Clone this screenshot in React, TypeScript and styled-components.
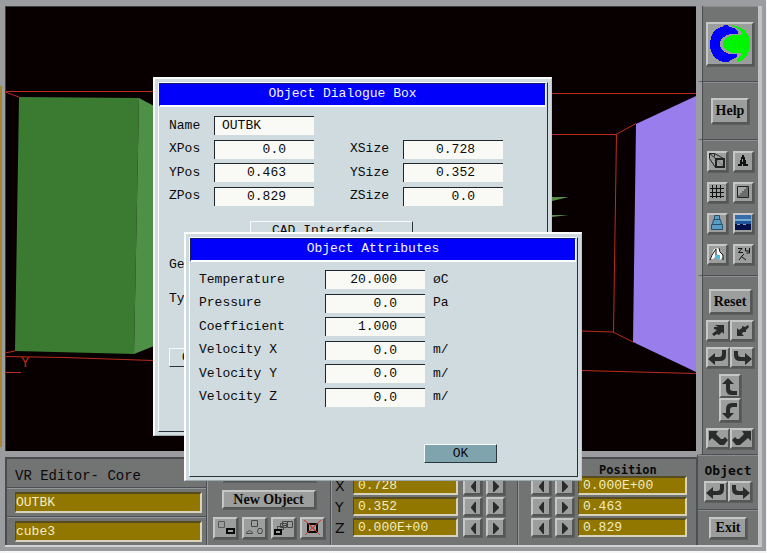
import React from "react";
import styled, { createGlobalStyle, css } from "styled-components";

const mono = '"Liberation Mono", "Courier New", monospace';
const serif = '"Liberation Serif", "Times New Roman", serif';

const GlobalStyle = createGlobalStyle`
  *, *::before, *::after { box-sizing: border-box; }
  body { margin: 0; padding: 0 1px 2px 0; background: #f6f6f6; }
  button, input { margin: 0; border-radius: 0; color: inherit; }
  svg { display: block; flex: none; }
`;

const Frame = styled.main`
  position: relative;
  display: flex;
  min-height: calc(100vh - 2px);
  padding: 6px 4px 4px 5px;
  background: linear-gradient(#a8852c, #a8852c) 0 86px / 2px 361px no-repeat, #9b9c9f;
  font: 13px/16px ${mono};
  color: #0a0a0a;
`;

const Shell = styled.div`
  flex: 1;
  display: grid;
  grid-template-columns: minmax(0, 1fr) 61px;
  border-right: 4px solid #c3c3c6;
  border-bottom: 2px solid #d2d2d2;
`;

const Workspace = styled.div`
  display: flex;
  flex-direction: column;
  gap: 6px;
`;

const Viewport = styled.section`
  flex: 1 1 0;
  min-height: 445px;
  margin-right: 1px;
  background: #080000;
  border-top: 1px solid #3c3c3c;
  border-left: 1px solid #3c3c3c;
  svg { width: 100%; height: 100%; }
`;

const ControlBar = styled.section`
  display: grid;
  grid-template-columns: 200px 124px 187px minmax(0, 1fr);
  height: 88px;
  background: #727473;
  border-top: 2px solid #4a4c4d;
  border-left: 2px solid #4a4c4d;
`;

const Panel = styled.div`
  min-width: 0;
  border-right: 1px solid #4b5056;
  box-shadow: 1px 0 #95989b;
`;

const NamePanel = styled(Panel)`
  display: flex;
  flex-direction: column;
`;

const PanelTitle = styled.h2`
  height: 28px;
  margin: 0;
  padding: 7px 0 0 8px;
  font: 14px/20px ${mono};
`;

const NameRow = styled.div`
  height: 29px;
  padding: 4px 4px 0 8px;
  border-top: 1px solid #4b5056;
  box-shadow: inset 0 1px #95989b;
`;

const GoldInput = styled.input<{ $tall?: boolean }>`
  display: block;
  width: 100%;
  height: ${(p) => (p.$tall ? 21 : 19)}px;
  padding: ${(p) => (p.$tall ? "0" : "0 4px")};
  border: solid;
  border-width: 2px 2px 2px 1px;
  border-color: #574b20 #d8d4bc #d8d4bc #574b20;
  background: #917600;
  color: #f3edc0;
  font: 13px/15px ${mono};
`;

const raised = css`
  border: solid;
  border-width: 2px;
  border-color: #c6c6c6 #565656 #565656 #c6c6c6;
  background: #9c9d9d;
  box-shadow: 1px 1px #5d5f5f;
`;

const TextButton = styled.button<{ $w: number; $h: number }>`
  ${raised}
  width: ${(p) => p.$w}px;
  height: ${(p) => p.$h}px;
  padding: 0;
  font: bold 14px/14px ${serif};
  white-space: nowrap;
`;

const IconButton = styled.button<{ $w?: number; $h?: number }>`
  ${raised}
  display: flex;
  align-items: center;
  justify-content: center;
  flex: none;
  width: ${(p) => p.$w ?? 21}px;
  height: ${(p) => p.$h ?? 21}px;
  padding: 0;
`;

const ObjectPanel = styled(Panel)`
  display: flex;
  flex-direction: column;
  align-items: center;
  gap: 8px;
  padding: 4px 4px 0;
`;

const ObjectTools = styled.div`
  display: flex;
  gap: 4px;
`;

const AxisPanel = styled(Panel)<{ $position?: boolean }>`
  display: flex;
  flex-direction: column;
  justify-content: flex-end;
  gap: 2px;
  padding: ${(p) => (p.$position ? "0 9px 8px 13px" : "0 12px 8px 4px")};
`;

const AxisTitle = styled.h3`
  margin: 0 0 -3px;
  padding-left: 68px;
  font: bold 12px/14px "DejaVu Sans Mono", monospace;
`;

const AxisRow = styled.div<{ $position?: boolean }>`
  display: grid;
  grid-template-columns: ${(p) => (p.$position ? "20px 19px minmax(0, 1fr)" : "13px minmax(0, 1fr) 18px 19px")};
  column-gap: ${(p) => (p.$position ? 4 : 5)}px;
  align-items: center;
`;

const AxisLabel = styled.label`
  font: 14px/18px "DejaVu Sans", sans-serif;
`;

const Sidebar = styled.aside`
  display: flex;
  flex-direction: column;
  background: #727473;
`;

const SideSection = styled.div<{ $h: number; $gap?: number; $top?: number; $last?: boolean; $wide?: boolean }>`
  display: flex;
  flex-direction: column;
  align-items: center;
  justify-content: center;
  gap: ${(p) => p.$gap ?? 0}px;
  padding-top: ${(p) => p.$top ?? 0}px;
  flex: ${(p) => (p.$last ? "1 0 auto" : "none")};
  min-height: ${(p) => p.$h}px;
  border-left: ${(p) => (p.$wide ? "1px solid #4b5056" : "5px solid #9b9c9f")};
  border-bottom: ${(p) => (p.$last ? "0" : "1px solid #4b5056")};
  box-shadow: ${(p) => (p.$wide ? "" : "inset 1px 0 #4b4d4e, ")}inset 0 1px #8b8d8d;
`;

const ToolGrid = styled.div`
  display: grid;
  grid-template-columns: repeat(2, 21px);
  gap: 10px 5px;
`;

const Pair = styled.div<{ $vertical?: boolean }>`
  display: flex;
  flex-direction: ${(p) => (p.$vertical ? "column" : "row")};
`;

const SideTitle = styled.h3`
  margin: 0;
  font: bold 13px/16px "DejaVu Sans Mono", monospace;
`;

const Dialog = styled.section<{ $left: number; $top: number; $w: number; $h: number }>`
  position: absolute;
  left: ${(p) => p.$left}px;
  top: ${(p) => p.$top}px;
  width: ${(p) => p.$w}px;
  height: ${(p) => p.$h}px;
  padding: 3px;
  border: solid;
  border-width: 2px 1px 1px 2px;
  border-color: #fbfdfd #bcc8cb #9ba7aa #fbfdfd;
  background: #cfdbde;
`;

const DialogInner = styled.div`
  height: 100%;
  border: 1px solid #25303a;
  border-top-color: #fbfdfd;
  border-left-color: #fbfdfd;
`;

const DialogTitle = styled.h1`
  height: 24px;
  margin: 0 1px 0 0;
  padding-right: 20px;
  border: solid;
  border-width: 1px 1px 2px 1px;
  border-color: #17176b #fff #fff #17176b;
  background: #0000fb;
  color: #f4f4ff;
  font: 13px/20px ${mono};
  text-align: center;
`;

const ObjectFields = styled.div`
  display: grid;
  grid-template-columns: 45px 100px 36px 53px 100px;
  align-content: space-between;
  align-items: center;
  height: 90px;
  margin: 9px 0 0 10px;
`;

const AttributeFields = styled.div`
  display: grid;
  grid-template-columns: 126px 100px 40px;
  align-content: space-between;
  align-items: center;
  height: 137px;
  margin: 8px 0 0 9px;
`;

const PositionLabel = styled.label`
  grid-column: 1;
`;

const SizeLabel = styled.label`
  grid-column: 4;
`;

const Unit = styled.span`
  padding-left: 8px;
`;

const Field = styled.input<{ $text?: boolean }>`
  width: 100%;
  height: 19px;
  padding: ${(p) => (p.$text ? "0 7px 1px" : "0 28px 1px 0")};
  border: 0;
  border-top: 1px solid #20262b;
  border-left: 1px solid #20262b;
  background: #f9faf5;
  font: 13px/16px ${mono};
  text-align: ${(p) => (p.$text ? "left" : "right")};
`;

const PlainButton = styled.button<{ $w: number; $accent?: boolean; $inset?: number }>`
  display: block;
  width: ${(p) => p.$w}px;
  height: 19px;
  padding: ${(p) => (p.$inset ? `0 0 0 ${p.$inset}px` : "0")};
  border: 1px solid;
  border-color: #f8fafa #29353c #29353c #f8fafa;
  background: ${(p) => (p.$accent ? "#7fa4ae" : "transparent")};
  font: 13px/16px ${mono};
  text-align: ${(p) => (p.$inset ? "left" : "center")};
`;

const DialogRows = styled.div`
  display: flex;
  flex-direction: column;
  align-items: flex-start;
  padding: 15px 0 0 10px;
`;

const CadSlot = styled.div`
  padding: 0 0 17px 81px;
`;

const TextRow = styled.p`
  margin: 0 0 18px;
`;

const CornerButton = styled.div`
  padding-top: 23px;
`;

const DialogFooter = styled.div`
  display: flex;
  justify-content: flex-end;
  padding: 37px 80px 0 0;
`;

type ArrowKind = "ne" | "sw" | "left" | "right" | "up" | "down" | "nw" | "nebend" | "prev" | "next";

const arrows: Record<ArrowKind, React.ReactNode> = {
  ne: <path d="M7 3h9v9l-2-2-3 3-2-1-3 2-2-2 5-4-3-1V5h4z" />,
  sw: <path d="M5 14V6l2 2 3-2 0-2 3 1 3-2 1 2-3 3 0 2-3 0-1 2 2 2z" />,
  left: <path d="M0 10l7-6v4h4q3 0 3-3V1h4v5q0 6-6 6H7v4z" />,
  right: <path d="M20 10l-7-6v4H9Q6 8 6 5V2H2v4q0 6 6 6h5v4z" />,
  up: <path d="M8 0l6 6h-4v4q0 3 3 3h4v4h-5q-6 0-6-6V6H2z" />,
  down: <path d="M8 17l-6-6h4V7q0-6 6-6h5v4h-4q-3 0-3 3v3h4z" />,
  nw: <path d="M1 1h9L8 4l5 5 2 0 2-2 3 3-4 5h-4L4 8l-3 3z" />,
  nebend: <path d="M19 1h-9l2 3-5 5-2 0-2-2-3 3 4 5h4l8-7 3 3z" />,
  prev: <path d="M13 4v11h-1l-4-5V9l4-5z" />,
  next: <path d="M7 4v11h1l5-5V9L8 4z" />,
};

const Arrow = ({ kind, small }: { kind: ArrowKind; small?: boolean }) => (
  <svg width={small ? 14 : 20} height={small ? 14 : 17} viewBox={small ? "3 2 14 14" : "0 0 20 17"} fill="#292c2b" aria-hidden>
    {arrows[kind]}
  </svg>
);

const Logo = () => (
  <svg width="42" height="38" viewBox="0 0 42 38" shapeRendering="crispEdges" aria-hidden>
    <path fill="#00f500" d="M23 0Q41 3 41 19 41 32 29 37l-1-3 5-4v-2h-9q-9-2-10-9 1-7 10-9h9V8l-4-4-6-3z" />
    <path fill="#0000fa" d="M15 0h3l2 2 5 1 4 4v2h-8q-10 3-10 10t9 10h8v3l-4 2-5 3h-5Q1 33 1 19 2 4 13 2z" />
  </svg>
);

type ToolKind = "perspective" | "text" | "grid" | "shade" | "lamp" | "sea" | "probe" | "axes";

const toolShapes: Record<ToolKind, React.ReactNode> = {
  perspective: <g fill="none" stroke="#222"><path d="M1.500 1.500h5v3M1.500 1.500v5l6 9M1.500 1.500l6 5M6.500 1.500l9 5" /><path strokeWidth="2" d="M8 7h8v8H8z" /><path stroke="#777" d="M9 8l6 6" /></g>,
  text: <path d="M8 3h2v2h1v3h1v4h2v2H9v-2H8v2H4v-2h2V8h1V5h1zm0 4v3h1V7z" />,
  grid: <path fill="none" stroke="#111" d="M4.500 2v13M8.500 2v13M12.500 2v13M2 5.500h14M2 9.500h14M2 13.500h14" />,
  shade: <g><path fill="#a6a6a6" stroke="#222" d="M3.500 3.500h11v11h-11z" /><path fill="#6b6d6c" d="M4 14V12h2v-2h2V8h2V6h2V4h2v10z" /></g>,
  lamp: <g stroke="#26516d" fill="#599bc5"><path d="M6.500 1.500h5v4h-5zM5.500 5.500h7l1 5h-9zM3.500 10.500h11v5h-11z" /></g>,
  sea: <g><path fill="#356da8" d="M1 1h16v4H1z" /><path fill="#75add2" d="M1 5h16v2H1z" /><path fill="#1e5697" d="M1 7h16v3H1z" /><path fill="#05104b" d="M1 10h2v1h3v-1h3v1h3v-1h5v6H1z" /></g>,
  probe: <g><path fill="#fff" d="M6 4l5-1 4 9-3 3-2-6-5 5H2z" /><path stroke="#111" fill="none" d="M2 15l2-5 4-6v6M11 3l1 4 3 3v5" /><path fill="#4dbbe0" d="M7 10h5v4H7z" /></g>,
  axes: <g fill="none" stroke="#111"><path d="M4 3.500h4L4.500 7.500H9M11.500 3v3h4V3M15.500 6v2h-3M5 15l3-4 2-2M8 12l4 3" /></g>,
};

const ToolIcon = ({ kind }: { kind: ToolKind }) => (
  <svg width="18" height="18" viewBox="0 0 18 18" fill="#111" aria-hidden>{toolShapes[kind]}</svg>
);

const objectIcons: [string, React.ReactNode][] = [
  ["Copy object", <><path stroke="#595b5a" d="M4.500 2.500h6v6h-6z" /><path stroke="#080808" strokeWidth="2" d="M13 10h7v4h-7z" /></>],
  ["Group objects", <><path stroke="#454746" d="M8.500 1.500h6v6h-6zM3.500 14.500v-1l3-2 3 2v1zM15.500 9.500h3l1 2-1 3h-3l-1-2z" /></>],
  ["Array objects", <><path stroke="#444" d="M5.500 7.500h6v3h-6zM8.500 4.500h6v4h-6zM10.500 2.500h5v4h-5zM15.500 2.500h5v6h-5z" /><path stroke="#080808" strokeWidth="2" d="M3 11h6v4H3z" /></>],
  ["Delete object", <><path stroke="#080808" strokeWidth="2" d="M7 5h9v8H7z" /><path stroke="#d03a2e" d="M3 1l6 5 10 10M20 1L4 16M9 7l5 5M9 11l5-4" /></>],
];

const Scene = () => (
  <svg viewBox="6 7 690 444" preserveAspectRatio="none" role="img" aria-label="Virtual reality scene">
    <g fill="none" stroke="#bb2c1c" strokeWidth="1">
      <path d="M5 91.500H154M552 93.500H696M5 92l14 5M552 134.500h64l20-11M616.500 134l-3 198-32-1M613 332l20 10M581 370.500l115 3M5 353l10-2M5 356.500l60 1 88 3M5 372.500h16" />
    </g>
    <path fill="#3b7a31" d="M19 97l120 1-5 256-119-3z" />
    <path fill="#4e9046" d="M139 98l15 8v240l-20 8z" />
    <path fill="#9a7dec" d="M696 96l-60 28-3 218 63 30z" />
    <path fill="#568b49" d="M552 197h17l-17 4zM552 215h17l-17 2z" />
    <text x="21" y="367" fill="#bb2c1c" fontFamily="Liberation Mono, monospace" fontSize="14">Y</text>
  </svg>
);

const IconAction = ({ kind, label }: { kind: ArrowKind; label: string }) => (
  <IconButton $w={24} aria-label={label}><Arrow kind={kind} /></IconButton>
);

const sizes = [["X", "0.728"], ["Y", "0.352"], ["Z", "0.000E+00"]];
const positions = [["X", "0.000E+00"], ["Y", "0.463"], ["Z", "0.829"]];
const attributes = [
  ["Temperature", "20.000", "øC"],
  ["Pressure", "0.0", "Pa"],
  ["Coefficient", "1.000", ""],
  ["Velocity X", "0.0", "m/"],
  ["Velocity Y", "0.0", "m/"],
  ["Velocity Z", "0.0", "m/"],
];
const objectFields = [
  ["XPos", "0.0", "XSize", "0.728"],
  ["YPos", "0.463", "YSize", "0.352"],
  ["ZPos", "0.829", "ZSize", "0.0"],
];
const tools: ToolKind[] = ["perspective", "text", "grid", "shade", "lamp", "sea", "probe", "axes"];

const ObjectDialog = () => (
  <Dialog $left={153} $top={77} $w={399} $h={359} role="dialog" aria-labelledby="object-title">
    <DialogInner>
      <DialogTitle id="object-title">Object Dialogue Box</DialogTitle>
      <ObjectFields>
        <PositionLabel htmlFor="name">Name</PositionLabel>
        <Field id="name" $text defaultValue="OUTBK" />
        {objectFields.map(([pos, value, size, extent]) => (
          <React.Fragment key={pos}>
            <PositionLabel htmlFor={pos}>{pos}</PositionLabel>
            <Field id={pos} defaultValue={value} />
            <SizeLabel htmlFor={size}>{size}</SizeLabel>
            <Field id={size} defaultValue={extent} />
          </React.Fragment>
        ))}
      </ObjectFields>
      <DialogRows>
        <CadSlot><PlainButton $w={163} $inset={21}>CAD Interface</PlainButton></CadSlot>
        <TextRow>Geometry</TextRow>
        <TextRow>Type</TextRow>
        <CornerButton><PlainButton $w={73} $inset={12}>OK</PlainButton></CornerButton>
      </DialogRows>
    </DialogInner>
  </Dialog>
);

const AttributesDialog = () => (
  <Dialog $left={184} $top={232} $w={398} $h={249} role="dialog" aria-labelledby="attributes-title">
    <DialogInner>
      <DialogTitle id="attributes-title">Object Attributes</DialogTitle>
      <AttributeFields>
        {attributes.map(([label, value, unit]) => (
          <React.Fragment key={label}>
            <label htmlFor={label}>{label}</label>
            <Field id={label} defaultValue={value} />
            <Unit>{unit}</Unit>
          </React.Fragment>
        ))}
      </AttributeFields>
      <DialogFooter><PlainButton $w={73} $accent>OK</PlainButton></DialogFooter>
    </DialogInner>
  </Dialog>
);

export default function App() {
  return (
    <>
      <GlobalStyle />
      <Frame>
        <Shell>
          <Workspace>
            <Viewport><Scene /></Viewport>
            <ControlBar>
              <NamePanel>
                <PanelTitle>VR Editor- Core</PanelTitle>
                <NameRow><GoldInput $tall aria-label="Object name" defaultValue="OUTBK" /></NameRow>
                <NameRow><GoldInput $tall aria-label="Object shape" defaultValue="cube3" /></NameRow>
              </NamePanel>
              <ObjectPanel>
                <TextButton $w={94} $h={19} aria-label="Object management" />
                <TextButton $w={94} $h={19}>New Object</TextButton>
                <ObjectTools>
                  {objectIcons.map(([label, shape]) => (
                    <IconButton key={label} $w={25} $h={22} aria-label={label}>
                      <svg width="23" height="18" viewBox="0 0 23 18" fill="none" aria-hidden>{shape}</svg>
                    </IconButton>
                  ))}
                </ObjectTools>
              </ObjectPanel>
              <AxisPanel>
                {sizes.map(([axis, value]) => (
                  <AxisRow key={axis}>
                    <AxisLabel htmlFor={"size-" + axis}>{axis}</AxisLabel>
                    <GoldInput id={"size-" + axis} defaultValue={value} />
                    <IconButton $w={19} $h={19} aria-label={"Decrease size " + axis}><Arrow kind="prev" small /></IconButton>
                    <IconButton $w={19} $h={19} aria-label={"Increase size " + axis}><Arrow kind="next" small /></IconButton>
                  </AxisRow>
                ))}
              </AxisPanel>
              <AxisPanel $position>
                <AxisTitle>Position</AxisTitle>
                {positions.map(([axis, value]) => (
                  <AxisRow key={axis} $position>
                    <IconButton $w={20} $h={19} aria-label={"Decrease position " + axis}><Arrow kind="prev" small /></IconButton>
                    <IconButton $w={19} $h={19} aria-label={"Increase position " + axis}><Arrow kind="next" small /></IconButton>
                    <GoldInput aria-label={"Position " + axis} defaultValue={value} />
                  </AxisRow>
                ))}
              </AxisPanel>
            </ControlBar>
          </Workspace>
          <Sidebar>
            <SideSection $h={76}><IconButton $w={48} $h={44} aria-label="About"><Logo /></IconButton></SideSection>
            <SideSection $h={58}><TextButton $w={38} $h={26}>Help</TextButton></SideSection>
            <SideSection $h={136}>
              <ToolGrid>
                {tools.map((kind) => <IconButton key={kind} aria-label={kind}><ToolIcon kind={kind} /></IconButton>)}
              </ToolGrid>
            </SideSection>
            <SideSection $h={179} $gap={6} $top={8}>
              <TextButton $w={43} $h={25}>Reset</TextButton>
              <Pair><IconAction kind="ne" label="Zoom in" /><IconAction kind="sw" label="Zoom out" /></Pair>
              <Pair><IconAction kind="left" label="Turn left" /><IconAction kind="right" label="Turn right" /></Pair>
              <Pair $vertical>
                <IconButton $w={22} $h={24} aria-label="Move up"><Arrow kind="up" /></IconButton>
                <IconButton $w={22} $h={24} aria-label="Move down"><Arrow kind="down" /></IconButton>
              </Pair>
              <Pair><IconAction kind="nw" label="Tilt left" /><IconAction kind="nebend" label="Tilt right" /></Pair>
            </SideSection>
            <SideSection $h={55} $gap={2} $wide>
              <SideTitle>Object</SideTitle>
              <Pair><IconAction kind="left" label="Rotate object left" /><IconAction kind="right" label="Rotate object right" /></Pair>
            </SideSection>
            <SideSection $h={35} $last $wide><TextButton $w={38} $h={22}>Exit</TextButton></SideSection>
          </Sidebar>
        </Shell>
        <ObjectDialog />
        <AttributesDialog />
      </Frame>
    </>
  );
}
